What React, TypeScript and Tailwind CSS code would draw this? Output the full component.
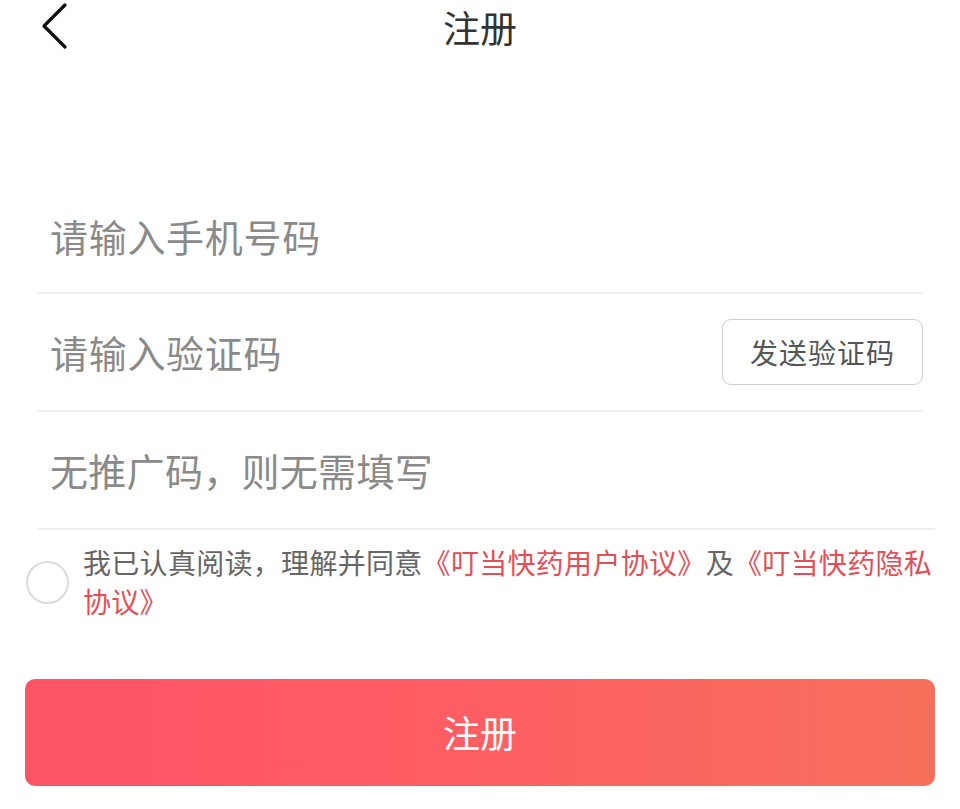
import React from 'react';

const font = { fontFamily: '"Noto Sans CJK SC", "Noto Sans", sans-serif' };

const App: React.FC = () => {
  return (
    <div className="w-[960px] h-[809px] bg-white overflow-hidden" style={font}>
      {/* 顶部导航 */}
      <div className="relative h-[56px] flex items-center justify-center">
        <svg
          className="absolute left-[38px] top-[2px]"
          width="32"
          height="48"
          viewBox="0 0 32 48"
          fill="none"
        >
          <polyline
            points="27,3 6,24 27,45"
            stroke="#111"
            strokeWidth="3.2"
            strokeLinecap="round"
            strokeLinejoin="round"
          />
        </svg>
        <span className="text-[37px] leading-none text-[#333] -mt-[2px]">注册</span>
      </div>

      {/* 表单 */}
      <div className="mt-[120px]">
        <div className="mx-[37px] h-[118px] border-b-2 border-[#efefef] flex items-center pl-[13px] pt-[4px]">
          <span className="text-[38px] leading-none tracking-[0.7px] text-[#8a8a8a]">请输入手机号码</span>
        </div>
        <div className="mx-[37px] h-[118px] border-b-2 border-[#efefef] flex items-center justify-between pl-[13px]">
          <span className="text-[38px] leading-none tracking-[0.7px] text-[#8a8a8a]">请输入验证码</span>
          <button className="w-[201px] h-[66px] rounded-[9px] border border-[#cfcfcf] bg-white flex items-center justify-center text-[28px] tracking-[1px] text-[#555]">
            发送验证码
          </button>
        </div>
        <div className="ml-[37px] mr-[25px] h-[118px] border-b-2 border-[#efefef] flex items-center pl-[13px]">
          <span className="text-[38px] leading-none tracking-[0.3px] text-[#8a8a8a]">无推广码，则无需填写</span>
        </div>
      </div>

      {/* 协议 */}
      <div className="flex items-center pl-[26px] pt-[13px]">
        <div className="w-[43px] h-[43px] rounded-full border-2 border-[#dcdcdc] shrink-0" />
        <p className="ml-[14px] w-[856px] text-[28px] leading-[39px] tracking-[0.3px] text-[#666]">
          我已认真阅读，理解并同意
          <span className="text-[#e44e58]">《叮当快药用户协议》</span>及
          <span className="text-[#e44e58]">《叮当快药隐私协议》</span>
        </p>
      </div>

      {/* 注册按钮 */}
      <div className="mx-[25px] mt-[58px]">
        <button className="w-full h-[107px] rounded-[10px] bg-gradient-to-r from-[#fe5265] via-[#fd5e63] to-[#f8705c] flex items-center justify-center text-[37px] text-white">
          注册
        </button>
      </div>
    </div>
  );
};

export default App;
